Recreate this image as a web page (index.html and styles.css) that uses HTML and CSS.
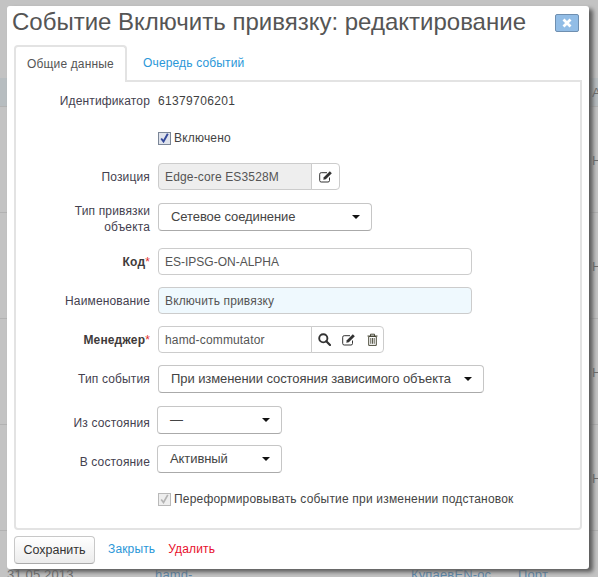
FILE: index.html
```html
<!DOCTYPE html>
<html lang="ru">
<head>
    <meta charset="UTF-8">
    <title>Событие Включить привязку: редактирование</title>
    <link rel="stylesheet" href="styles.css">
</head>
<body>
    <svg width="0" height="0" class="icon-defs">
        <symbol id="icon-edit" viewBox="0 0 14 13">
            <path d="M10.500 7.500v3a1.500 1.500 0 0 1-1.500 1.500H2.200A1.500 1.500 0 0 1 .7 10.500V4.200a1.500 1.500 0 0 1 1.500-1.500H8" fill="none" stroke="currentColor" stroke-width="1"/>
            <path d="M4.300 9.700l.5-2.400L10.800 1.200l2 2L6.800 9.200z" fill="currentColor"/>
        </symbol>
        <symbol id="icon-search" viewBox="0 0 13 13">
            <circle cx="5.300" cy="5.300" r="4.100" fill="none" stroke="currentColor" stroke-width="1.900"/>
            <path d="M8.300 8.300l3.700 3.700" stroke="currentColor" stroke-width="2.200" stroke-linecap="round"/>
        </symbol>
        <symbol id="icon-trash" viewBox="0 0 11 13">
            <path d="M.5 3h10M3.500 3V1.200h4V3" fill="none" stroke="currentColor" stroke-width="1"/>
            <path d="M1.700 3.500h7.600V12.400H1.700z" fill="none" stroke="currentColor" stroke-width="1"/>
            <path d="M3.800 5v5.800M5.500 5v5.800M7.200 5v5.800" stroke="currentColor" stroke-width=".9"/>
        </symbol>
    </svg>

    <!-- table behind the dialog -->
    <div class="backdrop">
        <div class="back-row back-head"><span class="back-right">А</span></div>
        <div class="back-row"><span class="back-right">Н</span></div>
        <div class="back-row"><span class="back-right">Н</span></div>
        <div class="back-row"><span class="back-right">Н</span></div>
        <div class="back-row"><span class="back-right">Н</span></div>
        <div class="back-row back-last">
            <span class="back-date">31.05.2013</span>
            <span class="back-link back-l1">hamd-</span>
            <span class="back-link back-l2">КупаевEN-ос</span>
            <span class="back-link back-l3">Порт</span>
        </div>
    </div>

    <div class="dialog">
        <div class="dialog-head">
            <h1>Событие Включить привязку: редактирование</h1>
            <span class="close-btn"><svg width="10" height="10" viewBox="0 0 10 10"><path d="M1.500 1.500l7 7M8.500 1.500l-7 7" stroke="#fff" stroke-width="2.800"/></svg></span>
        </div>

        <ul class="tabs">
            <li class="tab active">Общие данные</li>
            <li class="tab">Очередь событий</li>
        </ul>

        <div class="panel">
            <div class="row row-id">
                <label>Идентификатор</label>
                <span class="value">61379706201</span>
            </div>
            <div class="row row-enabled">
                <label></label>
                <span class="check checked"><svg width="9" height="10" viewBox="0 0 9 10"><path d="M1.200 5.500l2.300 3L7.800.8" fill="none" stroke="#33489a" stroke-width="1.900"/></svg></span>
                <span class="check-text">Включено</span>
            </div>
            <div class="row row-pos">
                <label>Позиция</label>
                <div class="group">
                    <span class="input disabled w-154">Edge-core ES3528M</span>
                    <span class="addon"><svg class="icon"><use href="#icon-edit"/></svg></span>
                </div>
            </div>
            <div class="row row-bind">
                <label>Тип привязки<br>объекта</label>
                <span class="select w-214">Сетевое соединение<i class="caret"></i></span>
            </div>
            <div class="row row-code">
                <label class="req"><b>Код</b><em>*</em></label>
                <span class="input code w-314">ES-IPSG-ON-ALPHA</span>
            </div>
            <div class="row row-name">
                <label>Наименование</label>
                <span class="input tinted w-314">Включить привязку</span>
            </div>
            <div class="row row-manager">
                <label class="req"><b>Менеджер</b><em>*</em></label>
                <div class="group">
                    <span class="input w-154">hamd-commutator</span>
                    <span class="addon addon-wide">
                        <svg class="icon icon-search"><use href="#icon-search"/></svg>
                        <svg class="icon"><use href="#icon-edit"/></svg>
                        <svg class="icon icon-trash"><use href="#icon-trash"/></svg>
                    </span>
                </div>
            </div>
            <div class="row row-event">
                <label>Тип события</label>
                <span class="select w-326">При изменении состояния зависимого объекта<i class="caret"></i></span>
            </div>
            <div class="row row-from">
                <label class="low">Из состояния</label>
                <span class="select state">—<i class="caret"></i></span>
            </div>
            <div class="row row-to">
                <label class="low">В состояние</label>
                <span class="select state">Активный<i class="caret"></i></span>
            </div>
            <div class="row row-reform">
                <label></label>
                <span class="check off"><svg width="9" height="10" viewBox="0 0 9 10"><path d="M1.200 5.500l2.300 3L7.800.8" fill="none" stroke="#b4b4b4" stroke-width="1.700"/></svg></span>
                <span class="check-text">Переформировывать событие при изменении подстановок</span>
            </div>
        </div>

        <div class="dialog-foot">
            <button class="save-btn" type="button">Сохранить</button>
            <a class="foot-link">Закрыть</a>
            <a class="foot-link danger">Удалить</a>
        </div>
    </div>
</body>
</html>
```
FILE: styles.css
```css
html, body {
    height: 100%;
    margin: 0;
    overflow: hidden;
    font-family: "Liberation Sans", Arial, sans-serif;
    font-size: 12px;
    letter-spacing: .15px;
    color: #333;
}

body {
    position: relative;
    background-color: #c3c3c3;
}

.icon-defs {
    position: absolute;
}

/* page behind the dialog */
.backdrop {
    height: 100%;
    overflow: hidden;
}
.back-row {
    position: relative;
    box-sizing: border-box;
    height: 106px;
    border-bottom: 1px solid #b2b2b2;
}
.back-head {
    height: 107px;
    background: linear-gradient(#c3c3c3 78px, #b7bdc0 78px);
}
.back-right {
    position: absolute;
    left: 592px;
    top: 46px;
    color: #6d6d6d;
    font-size: 13px;
}
.back-head .back-right {
    top: 85px;
}
.back-last {
    border-bottom: none;
}
.back-last span {
    position: absolute;
    top: 36px;
    font-size: 13px;
}
.back-date { left: 7px; color: #6d6d6d; }
.back-link { color: #5b87ab; }
.back-l1 { left: 155px; }
.back-l2 { left: 411px; }
.back-l3 { left: 518px; }

/* dialog */
.dialog {
    position: absolute;
    left: 7px;
    top: 6px;
    width: 582px;
    height: 563px;
    box-sizing: border-box;
    padding: 0 7px;
    background-color: #fff;
    border-radius: 3px;
    box-shadow: 4px 3px 4px #5c5c5c;
}

.dialog-head {
    display: flex;
    justify-content: space-between;
    height: 39px;
}
.dialog-head h1 {
    margin: 0 0 0 -2px;
    font-size: 24px;
    font-weight: normal;
    letter-spacing: 0;
    line-height: 32px;
    color: #555;
    white-space: nowrap;
}
.close-btn {
    display: flex;
    align-items: center;
    justify-content: center;
    box-sizing: border-box;
    width: 24px;
    height: 18px;
    margin: 8px 3px 0 0;
    background-color: #92bde6;
    border: 1px solid #6f8fb0;
    border-radius: 2px;
}

/* tabs */
.tabs {
    display: flex;
    margin: 0;
    padding: 0;
    list-style: none;
    height: 35px;
    position: relative;
    z-index: 1;
}
.tab {
    padding: 11px 14px 0;
    margin-left: 2px;
    line-height: 15px;
    color: #2a97d8;
    white-space: nowrap;
}
.tab.active {
    margin-left: 0;
    box-sizing: border-box;
    width: 113px;
    height: 37px;
    color: #555;
    background-color: #fff;
    border: 2px solid #e3e3e3;
    border-bottom: none;
    border-radius: 4px 4px 0 0;
    padding: 10px 0 0 11px;
}

.panel {
    box-sizing: border-box;
    height: 450px;
    border: 2px solid #e3e3e3;
    border-radius: 0 0 4px 4px;
}

/* form rows */
.row {
    display: flex;
    align-items: center;
}
.row label {
    flex-shrink: 0;
    width: 134px;
    margin-right: 8px;
    text-align: right;
    line-height: 16px;
    color: #44414f;
}
.row-id { margin-top: 11px; height: 16px; }
.row-enabled { margin-top: 21px; height: 16px; }
.row-pos { margin-top: 17px; }
.row-bind { margin-top: 13px; align-items: flex-start; }
.row-code { margin-top: 13px; }
.row-name { margin-top: 12px; }
.row-manager { margin-top: 12px; }
.row-event { margin-top: 12px; }
.row-from { margin-top: 13px; }
.row-to { margin-top: 11px; }
.row-reform { margin-top: 19px; height: 14px; }

.row label.low {
    padding-top: 6px;
}
.row label.req b {
    color: #3f3b3b;
}
.row label.req em {
    color: #e0302c;
    font-style: normal;
}

.value {
    color: #3f3f3f;
    letter-spacing: .35px;
}

.input {
    display: block;
    box-sizing: border-box;
    height: 27px;
    padding: 0 6px;
    line-height: 26px;
    color: #555;
    background-color: #fff;
    border: 1px solid #ccc;
    border-radius: 4px;
    white-space: nowrap;
}
.input.disabled { background-color: #eee; }
.input.tinted { background-color: #eff9fe; }
.input.code { letter-spacing: 0; }

.w-154 { width: 154px; }
.w-314 { width: 314px; }
.w-214 { width: 214px; }
.w-326 { width: 326px; }

.group {
    display: flex;
}
.group .input {
    border-radius: 4px 0 0 4px;
}
.addon {
    display: flex;
    align-items: center;
    justify-content: center;
    box-sizing: border-box;
    width: 29px;
    height: 27px;
    margin-left: -1px;
    border: 1px solid #ccc;
    border-radius: 0 4px 4px 0;
    color: #333;
}
.addon-wide {
    width: 73px;
    gap: 11px;
}
.icon {
    width: 14px;
    height: 13px;
}
.icon-search { width: 13px; }
.icon-trash { width: 11px; color: #4a4a3a; }

.select {
    position: relative;
    display: block;
    box-sizing: border-box;
    height: 28px;
    padding-left: 12px;
    font-size: 13px;
    letter-spacing: -.08px;
    line-height: 25px;
    color: #444;
    background-color: #fff;
    border: 1px solid #c6c6c6;
    border-bottom-color: #aaa;
    border-radius: 4px;
    white-space: nowrap;
}
.select.state {
    width: 125px;
    margin-left: -1px;
}
.caret {
    position: absolute;
    right: 11px;
    top: 11px;
    border-top: 4px solid #111;
    border-left: 4px solid transparent;
    border-right: 4px solid transparent;
}

.check {
    display: flex;
    align-items: center;
    justify-content: center;
    box-sizing: border-box;
    width: 13px;
    height: 13px;
    margin-right: 3px;
    border: 1px solid #7b8697;
    background-color: #dfe3ec;
}
.check.off {
    border-color: #b9b9b9;
    background-color: #eee;
}
.check-text {
    color: #444;
    letter-spacing: .19px;
}

/* footer */
.dialog-foot {
    display: flex;
    align-items: center;
    height: 28px;
    margin-top: 6px;
}
.save-btn {
    width: 81px;
    height: 28px;
    margin: 0 13px 0 0;
    padding: 0;
    font-family: inherit;
    font-size: 12.500px;
    color: #333;
    background: linear-gradient(#fff, #ececec);
    border: 1px solid #c8c8c8;
    border-bottom-color: #aaa;
    border-radius: 4px;
}
.foot-link {
    margin-right: 13px;
    padding-bottom: 2px;
    color: #2a97d8;
}
.foot-link.danger {
    color: #e8112d;
}
```
